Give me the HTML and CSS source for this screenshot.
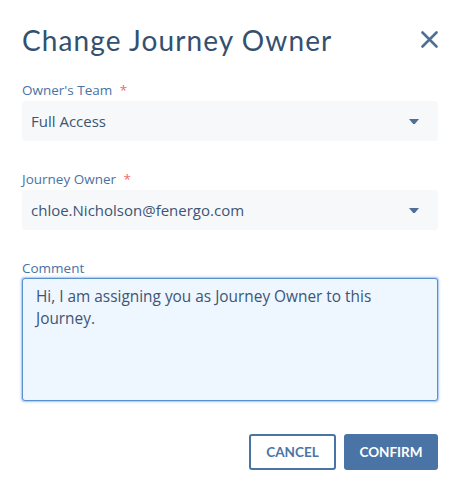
FILE: index.html
```html
<!DOCTYPE html>
<html>
<head>
<meta charset="utf-8">
<link rel="stylesheet" href="styles.css">
</head>
<body>
<div class="dialog">
  <div class="header">
    <h1 class="title">Change Journey Owner</h1>
    <svg class="close" width="17" height="17" viewBox="0 0 17 17"><path d="M1.5 1.5 L15.5 15.5 M15.5 1.5 L1.5 15.5" stroke="#4f6f94" stroke-width="2.6" stroke-linecap="round"/></svg>
  </div>
  <div class="field">
    <label class="label">Owner's Team <span class="req">*</span></label>
    <div class="select"><span>Full Access</span><svg class="caret" width="10" height="5" viewBox="0 0 10 5"><path d="M0 0 H10 L5.8 5 H4.2 Z" fill="#4f6f94"/></svg></div>
  </div>
  <div class="field">
    <label class="label">Journey Owner <span class="req">*</span></label>
    <div class="select"><span>chloe.Nicholson@fenergo.com</span><svg class="caret" width="10" height="5" viewBox="0 0 10 5"><path d="M0 0 H10 L5.8 5 H4.2 Z" fill="#4f6f94"/></svg></div>
  </div>
  <div class="field comment-field">
    <label class="label">Comment</label>
    <div class="textarea">Hi, I am assigning you as Journey Owner to this Journey.</div>
  </div>
  <div class="actions">
    <button class="btn btn-outline">CANCEL</button>
    <button class="btn btn-primary">CONFIRM</button>
  </div>
</div>
</body>
</html>
```
FILE: styles.css
```css
html, body { margin: 0; padding: 0; background: #fff; }
body { font-family: "Open Sans", sans-serif; color: #3d5575; }
.dialog { width: 460px; height: 495px; padding: 0 22px 0 22px; box-sizing: border-box; }
.header { display: flex; align-items: center; justify-content: space-between; height: 81px; }
.title { margin: 0; font-family: "Lato", sans-serif; font-weight: 400; font-size: 28px; color: #34506f; letter-spacing: 1.1px; padding-bottom: 2px; }
.close { margin-bottom: 3px; }
.field { display: flex; flex-direction: column; }
.label { font-family: "Open Sans", sans-serif; font-size: 13.5px; color: #4a72a3; height: 18px; line-height: 18px; }
.req { color: #f06a6a; margin-left: 4px; }
.select { height: 40px; background: #f6f8fa; border-radius: 4px; display: flex; align-items: center; justify-content: space-between; padding: 0 19px 0 9px; font-family: "Open Sans", sans-serif; font-size: 15px; color: #3d5575; margin-top: 2px; margin-bottom: 29px; }
.caret { margin-top: 1px; }
.textarea { height: 123px; box-sizing: border-box; margin-top: 1px; border: 1px solid #5a8fd0; border-radius: 3px; background: #eef6ff; box-shadow: 0 0 0 1px rgba(120, 170, 230, 0.35), 0 0 3px 1px rgba(120,170,230,0.45); padding: 7px 40px 0 13px; font-family: "Open Sans", sans-serif; font-size: 15.4px; line-height: 22px; color: #3d5575; }
.actions { display: flex; justify-content: flex-end; gap: 8px; margin-top: 33px; }
.btn { height: 36px; box-sizing: border-box; font-family: "Lato", sans-serif; font-size: 13.5px; font-weight: 700; border-radius: 3px; cursor: pointer; }
.btn-outline { width: 87px; background: #fff; border: 2px solid #4a74a6; color: #4a74a6; }
.btn-primary { width: 94px; background: #4a74a6; border: none; color: #fff; }
```
